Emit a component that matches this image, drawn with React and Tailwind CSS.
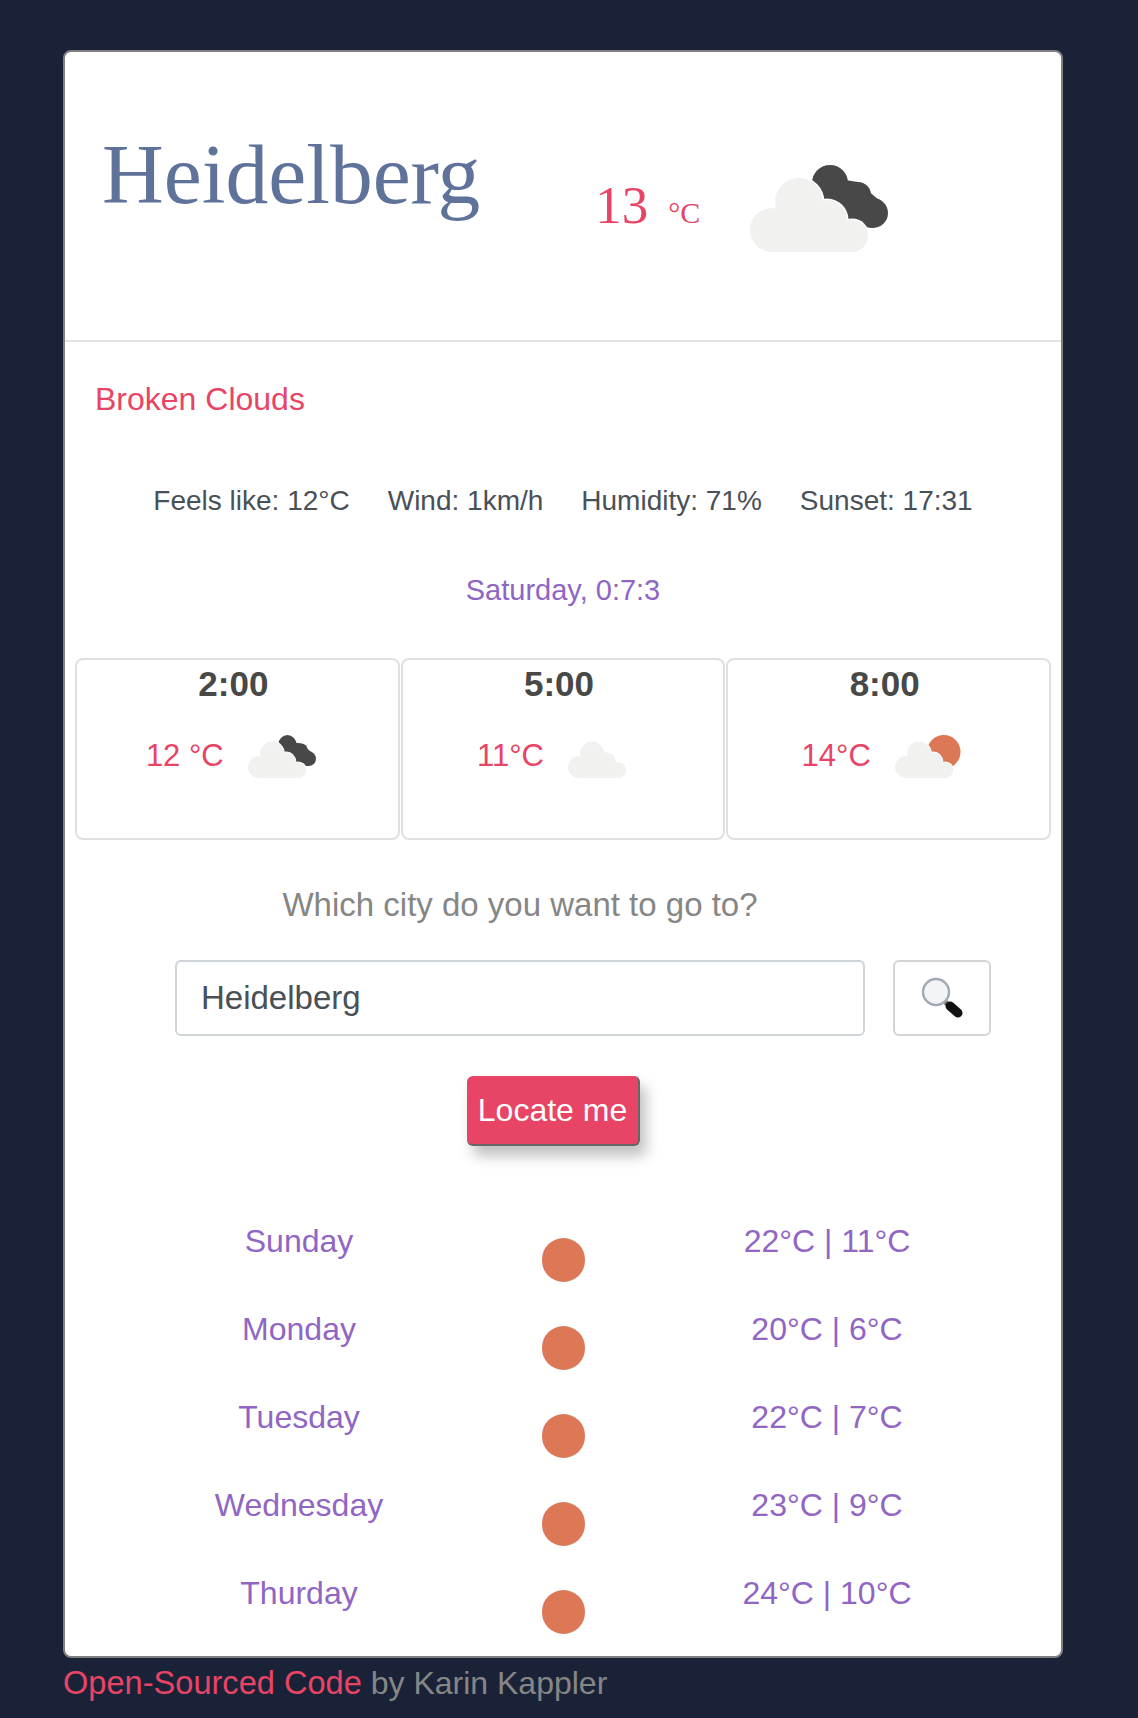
const hours = [
    { time: '2:00', temp: '12 °C', kind: 'night' },
    { time: '5:00', temp: '11°C', kind: 'cloud' },
    { time: '8:00', temp: '14°C', kind: 'sun' },
];

const days = [
    { day: 'Sunday', temps: '22°C | 11°C' },
    { day: 'Monday', temps: '20°C | 6°C' },
    { day: 'Tuesday', temps: '22°C | 7°C' },
    { day: 'Wednesday', temps: '23°C | 9°C' },
    { day: 'Thurday', temps: '24°C | 10°C' },
];

// cloud puffs: left, top, shoulder, right
const PUFFS = [
    [22, 65, 22],
    [49, 37, 24],
    [77, 55, 20],
    [102, 71, 16],
];

function CloudShape({ fill, grow = 0 }) {
    return (
        <g fill={fill}>
            {PUFFS.map(([cx, cy, r]) => (
                <circle key={cx} cx={cx} cy={cy} r={r + grow} />
            ))}
            <rect x="22" y="57" width="80" height={30 + grow} />
        </g>
    );
}

function WeatherIcon({ kind, className }) {
    return (
        <svg viewBox="0 0 138 87" className={className}>
            {kind === 'night' && (
                <g fill="#484848">
                    <circle cx="80" cy="18" r="18" />
                    <circle cx="108" cy="30" r="13" />
                    <circle cx="123" cy="48" r="15" />
                    <polygon points="64,10 108,17 130,36 124,63 90,60 62,20" />
                </g>
            )}
            {kind === 'sun' && <circle cx="99" cy="34" r="34" fill="#dc7856" />}
            {kind !== 'cloud' && <CloudShape fill="#ffffff" grow={1.5} />}
            <CloudShape fill="#f1f1ef" />
        </svg>
    );
}

function SearchIcon() {
    return (
        <svg viewBox="0 0 42 44" className="h-[44px] w-[42px]">
            <line x1="23" y1="25" x2="29" y2="30" stroke="#6f7276" strokeWidth="5" />
            <line x1="29" y1="30" x2="37" y2="37" stroke="#111111" strokeWidth="9" strokeLinecap="round" />
            <circle cx="15" cy="16" r="13" fill="#f3f4f6" stroke="#a4abb3" strokeWidth="2.5" />
        </svg>
    );
}

export default function App() {
    return (
        <div className="min-h-[1718px] bg-[#1a2238] px-[63px] pt-[50px] font-['Liberation_Sans',sans-serif] text-[32px] leading-[40px]">
            <div className="w-[1000px] rounded-lg border-2 border-[#808080] bg-white">
                <div className="flex h-[290px] items-start border-b-2 border-[#e2e2e2] pl-[37px]">
                    <h1 className="mt-[80px] font-['Liberation_Serif',serif] text-[85.5px] leading-none text-[#5f7299]">
                        Heidelberg
                    </h1>
                    <div className="ml-[115px] mt-[127px] flex items-baseline font-['Liberation_Serif',serif] leading-none text-[#e84466]">
                        <span className="text-[53px]">13</span>
                        <span className="ml-[20px] text-[30px]">°C</span>
                    </div>
                    <WeatherIcon kind="night" className="ml-[50px] mt-[113px] h-[87px] w-[138px]" />
                </div>

                <p className="ml-[30px] mt-[37px] text-[#e84466]">Broken Clouds</p>

                <div className="mt-[62px] flex justify-center gap-[38px] text-[28px] text-[#495057]">
                    <span>Feels like: 12°C</span>
                    <span>Wind: 1km/h</span>
                    <span>Humidity: 71%</span>
                    <span>Sunset: 17:31</span>
                </div>

                <p className="mt-[49px] text-center text-[29px] text-[#9065c4]">Saturday, 0:7:3</p>

                <div className="mt-[48px] grid grid-cols-3 gap-px pl-[10px] pr-[10px]">
                    {hours.map((hour) => (
                        <div key={hour.time} className="h-[182px] rounded-lg border-2 border-[#e0e0e0] pt-[4px]">
                            <p className="pr-[8px] text-center text-[35px] font-bold text-[#484848]">{hour.time}</p>
                            <div className="mt-[29px] flex items-center justify-center gap-[24px] pr-[13px] text-[31px] text-[#e84466]">
                                <span>{hour.temp}</span>
                                <WeatherIcon kind={hour.kind} className="mt-[2px] h-[43px] w-[68px]" />
                            </div>
                        </div>
                    ))}
                </div>

                <p className="mt-[45px] w-[910px] text-center text-[33px] text-[#868686]">
                    Which city do you want to go to?
                </p>

                <div className="ml-[110px] mt-[35px] flex gap-[28px]">
                    <div className="flex h-[76px] w-[690px] items-center rounded-md border-2 border-[#ced4da] pl-[24px] text-[33px] text-[#495057]">
                        Heidelberg
                    </div>
                    <div className="flex h-[76px] w-[98px] items-center justify-center rounded-md border-2 border-[#d4d4d4]">
                        <SearchIcon />
                    </div>
                </div>

                <button className="ml-[402px] mt-[40px] block h-[70px] w-[173px] rounded-md border-b-2 border-r-2 border-[#666666] bg-[#e84466] text-white shadow-[6px_10px_14px_rgba(0,0,0,0.25)]">
                    Locate me
                </button>

                <div className="mt-[74px] flex flex-col gap-[26px] pb-[22px] pl-[102px] text-[#9065c4]">
                    {days.map((item) => (
                        <div key={item.day} className="grid h-[62px] w-[792px] grid-cols-3 text-center">
                            <span className="mt-px">{item.day}</span>
                            <span className="mx-auto mt-[18px] h-[44px] w-[43px] rounded-full bg-[#dc7856]" />
                            <span className="mt-px">{item.temps}</span>
                        </div>
                    ))}
                </div>
            </div>

            <p className="mt-[5px] text-[#868686]">
                <span className="text-[32.6px] text-[#e84466]">Open-Sourced Code</span> by Karin Kappler
            </p>
        </div>
    );
}
